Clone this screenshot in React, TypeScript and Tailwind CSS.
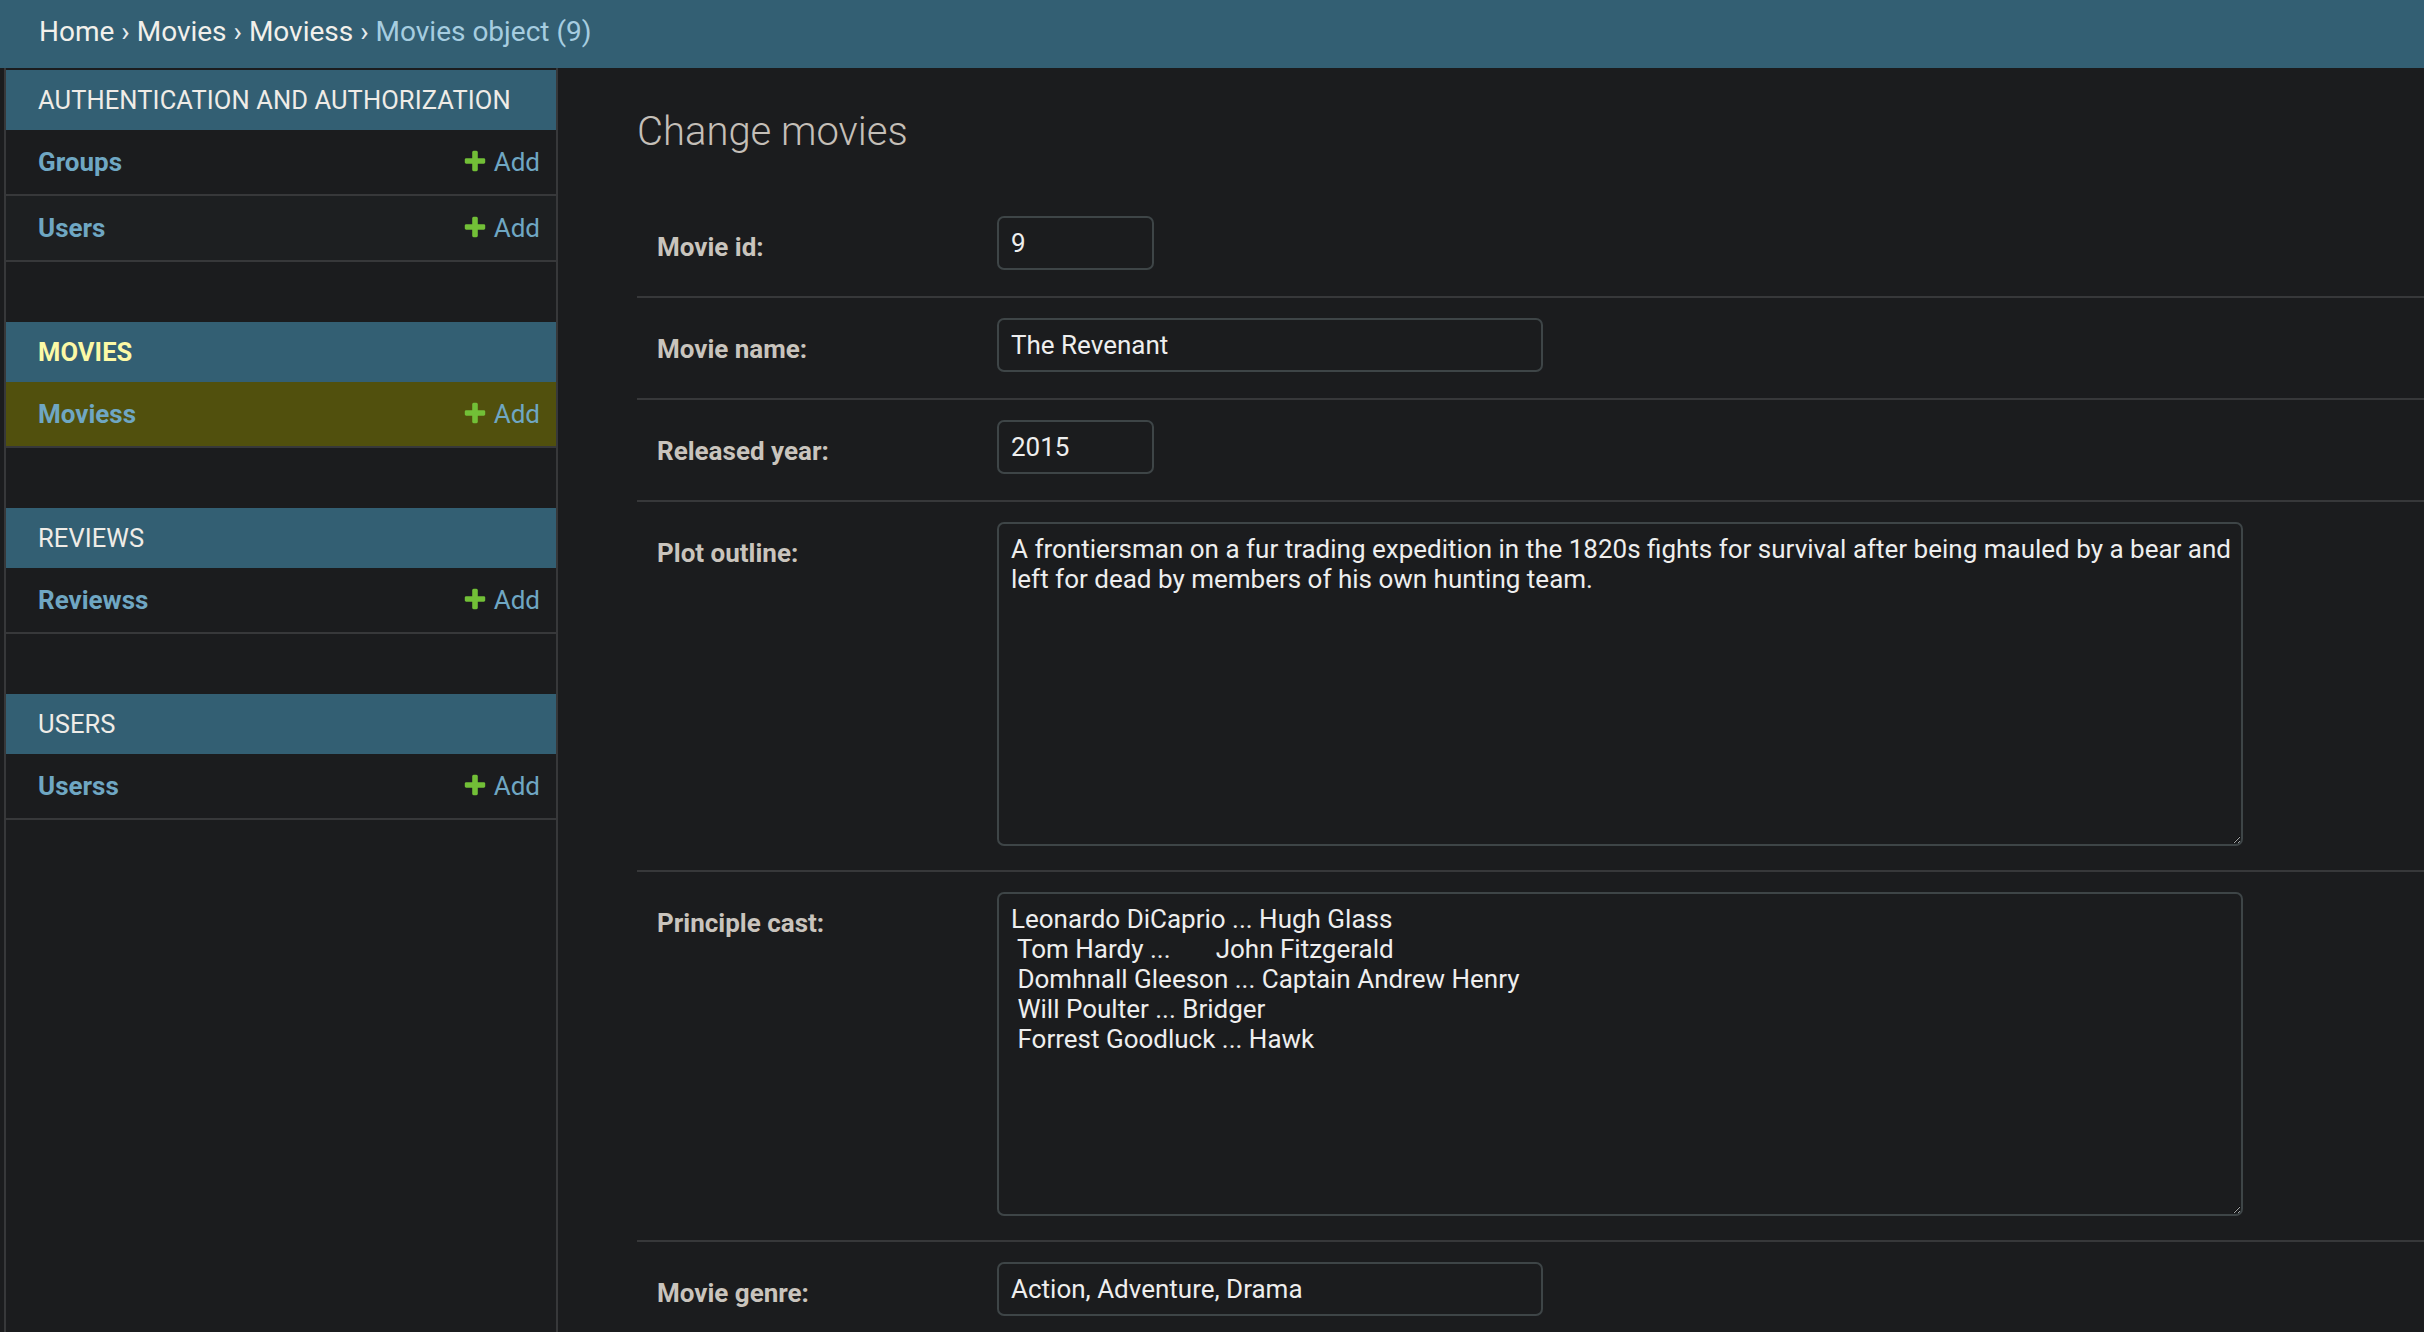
import React from "react";

function PlusIcon() {
  return (
    <svg width="26" height="26" viewBox="0 0 1792 1792" className="mt-[2px] mr-[6px] shrink-0">
      <path
        fill="#72bf37"
        d="M1600 796v192q0 40-28 68t-68 28h-416v416q0 40-28 68t-68 28h-192q-40 0-68-28t-28-68v-416h-416q-40 0-68-28t-28-68v-192q0-40 28-68t68-28h416v-416q0-40 28-68t68-28h192q40 0 68 28t28 68v416h416q40 0 68 28t28 68z"
      />
    </svg>
  );
}

type Row = { name: string; selected?: boolean; alt?: boolean };

function Module({ title, rows, current }: { title: string; rows: Row[]; current?: boolean }) {
  return (
    <div className="mb-[60px]">
      <div
        className={
          current
            ? "h-[60px] bg-[#335f73] pl-[32px] pt-[16px] text-[25.5px] leading-[28px] tracking-[0.1px] uppercase font-bold text-[#fcf9a6]"
            : "h-[60px] bg-[#335f73] pl-[32px] pt-[16px] text-[25.5px] leading-[28px] tracking-[0.1px] uppercase text-[#efece7]"
        }
      >
        {title}
      </div>
      {rows.map((r) => (
        <div
          key={r.name}
          className={
            r.selected
              ? "flex justify-between bg-[#51500d] border-b-2 border-[#37383a] py-[16px] pl-[32px] pr-[16px] text-[26px] leading-[32px]"
              : r.alt
              ? "flex justify-between bg-[#1d1f21] border-b-2 border-[#37383a] py-[16px] pl-[32px] pr-[16px] text-[26px] leading-[32px]"
              : "flex justify-between border-b-2 border-[#37383a] py-[16px] pl-[32px] pr-[16px] text-[26px] leading-[32px]"
          }
        >
          <span className="font-bold text-[#6fa7c3]">{r.name}</span>
          <span className="flex text-[#6fa7c3]">
            <PlusIcon />
            <span>Add</span>
          </span>
        </div>
      ))}
    </div>
  );
}

function FormRow({ label, tall, children }: { label: string; tall?: boolean; children: React.ReactNode }) {
  return (
    <div
      className={
        tall
          ? "flex border-b-2 border-[#37383a] pl-[20px] pt-[20px] pb-[24px]"
          : "flex border-b-2 border-[#37383a] pl-[20px] pt-[20px] pb-[26px]"
      }
    >
      <label className="w-[340px] shrink-0 pt-[18px] text-[26px] leading-[26px] font-bold text-[#c9c4bd]">
        {label}
      </label>
      {children}
    </div>
  );
}

const inputCls =
  "h-[54px] rounded-[7px] border-2 border-[#3e4547] bg-transparent px-[12px] py-[10px] text-[26px] leading-[30px] text-[#eeeeee] outline-none";

const textareaCls =
  "w-[1246px] h-[324px] rounded-[7px] border-2 border-[#3e4547] bg-transparent px-[12px] py-[10px] text-[26px] leading-[30px] text-[#eeeeee] outline-none overflow-hidden";

export default function App() {
  return (
    <div className="h-[1332px] overflow-hidden bg-[#1b1c1e] font-[Roboto,sans-serif]">
      <div className="h-[68px] bg-[#335f73] pl-[39px] pt-[20px] text-[28px] leading-[24px] text-[#f2f0eb] whitespace-nowrap">
        <span>Home</span> <span className="text-[#e6ecef]">›</span> <span>Movies</span>{" "}
        <span className="text-[#e6ecef]">›</span> <span>Moviess</span>{" "}
        <span className="text-[#e6ecef]">›</span>{" "}
        <span className="text-[#a6cde0]">Movies object (9)</span>
      </div>
      <div className="flex h-[1264px]">
        <div className="w-[6px] shrink-0 border-r-2 border-[#37383a]" />
        <nav className="w-[552px] shrink-0 border-r-2 border-[#37383a] pt-[2px]">
          <Module
            title="Authentication and Authorization"
            rows={[{ name: "Groups" }, { name: "Users", alt: true }]}
          />
          <Module title="Movies" current rows={[{ name: "Moviess", selected: true }]} />
          <Module title="Reviews" rows={[{ name: "Reviewss" }]} />
          <Module title="Users" rows={[{ name: "Userss" }]} />
        </nav>
        <main className="flex-1 min-w-0 pl-[79px] pt-[40px]">
          <h1 className="text-[40px] leading-[47px] font-light text-[#c4bfb8] mb-[41px]">Change movies</h1>
          <FormRow label="Movie id:">
            <input className={inputCls + " w-[157px]"} defaultValue="9" readOnly />
          </FormRow>
          <FormRow label="Movie name:">
            <input className={inputCls + " w-[546px]"} defaultValue="The Revenant" readOnly />
          </FormRow>
          <FormRow label="Released year:">
            <input className={inputCls + " w-[157px]"} defaultValue="2015" readOnly />
          </FormRow>
          <FormRow label="Plot outline:" tall>
            <textarea
              className={textareaCls}
              wrap="off"
              readOnly
              defaultValue={
                "A frontiersman on a fur trading expedition in the 1820s fights for survival after being mauled by a bear and\nleft for dead by members of his own hunting team."
              }
            />
          </FormRow>
          <FormRow label="Principle cast:" tall>
            <textarea
              className={textareaCls}
              wrap="off"
              readOnly
              defaultValue={
                "Leonardo DiCaprio ... Hugh Glass\n Tom Hardy ...       John Fitzgerald\n Domhnall Gleeson ... Captain Andrew Henry\n Will Poulter ... Bridger\n Forrest Goodluck ... Hawk"
              }
            />
          </FormRow>
          <FormRow label="Movie genre:">
            <input className={inputCls + " w-[546px]"} defaultValue="Action, Adventure, Drama" readOnly />
          </FormRow>
        </main>
      </div>
    </div>
  );
}
